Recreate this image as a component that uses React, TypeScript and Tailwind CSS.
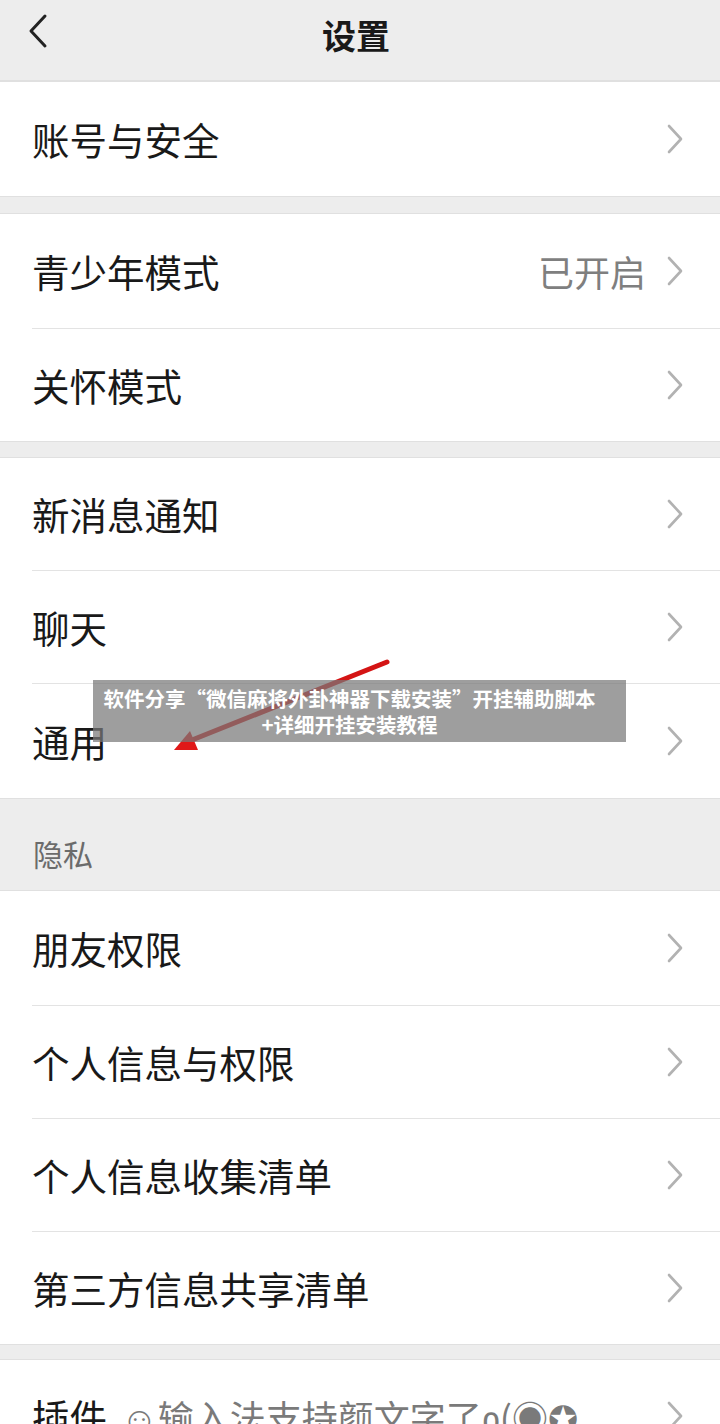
import React from "react";

const font = { fontFamily: '"Noto Sans CJK SC", "Noto Sans", sans-serif' };

function Chevron() {
  return (
    <svg width="18" height="30" viewBox="0 0 18 30" className="shrink-0">
      <path d="M3 2 L15 15 L3 28" fill="none" stroke="#b2b2b2" strokeWidth="2.6" strokeLinecap="round" strokeLinejoin="round" />
    </svg>
  );
}

function Row({ label, value, h = "h-[112px]", divider = false, extra }: { label: string; value?: string; h?: string; divider?: boolean; extra?: React.ReactNode }) {
  return (
    <div className="bg-white">
      {divider && <div className="ml-[32px] h-px bg-[#e3e3e3]" />}
      <div className={`${h} flex items-center pl-[32px] pr-[36px]`}>
        <div className="flex-1 flex items-center min-w-0 overflow-hidden whitespace-nowrap">
          <span className="text-[37.5px] text-[#191919] leading-normal">{label}</span>
          {extra}
        </div>
        {value && <span className="text-[36px] text-[#7f7f7f] leading-normal mr-[20px]">{value}</span>}
        <Chevron />
      </div>
    </div>
  );
}

function Group({ children }: { children: React.ReactNode }) {
  return <div className="border-y border-[#e0e0e0] bg-white">{children}</div>;
}

export default function App() {
  return (
    <div className="relative w-[720px] h-[1424px] overflow-hidden bg-[#ededed]" style={font}>
      <header className="h-[81px] border-b border-[#e0e0e0] flex items-center justify-center relative bg-[#ededed]">
        <svg width="24" height="38" viewBox="0 0 24 38" className="absolute left-[26px] top-[13px]">
          <path d="M19 3 L5 18 L19 33" fill="none" stroke="#222" strokeWidth="3" strokeLinecap="round" strokeLinejoin="round" />
        </svg>
        <h1 className="text-[34px] font-bold text-[#191919] leading-normal -mt-[12px] -ml-[8px]">设置</h1>
      </header>

      <Group>
        <Row label="账号与安全" h="h-[114px]" />
      </Group>
      <div className="h-[16px]" />
      <Group>
        <Row label="青少年模式" value="已开启" h="h-[114px]" />
        <Row label="关怀模式" divider />
      </Group>
      <div className="h-[15px]" />
      <Group>
        <Row label="新消息通知" />
        <Row label="聊天" divider />
        <Row label="通用" divider h="h-[114px]" />
      </Group>
      <div className="h-[91px] flex items-center pl-[33px]">
        <span className="text-[30px] text-[#6b6b6b] leading-normal mt-[18px]">隐私</span>
      </div>
      <Group>
        <Row label="朋友权限" h="h-[114px]" />
        <Row label="个人信息与权限" divider />
        <Row label="个人信息收集清单" divider />
        <Row label="第三方信息共享清单" divider />
      </Group>
      <div className="h-[14px]" />
      <Group>
        <Row
          label="插件"
          h="h-[112px]"
          extra={<span className="ml-[14px] text-[36px] text-[#7a7a7a] leading-normal">☺输入法支持颜文字了ჲ(◉✪..</span>}
        />
      </Group>

      <svg className="absolute left-0 top-0 pointer-events-none" width="720" height="1424">
        <line x1="387" y1="662" x2="192" y2="740" stroke="#d41414" strokeWidth="5" strokeLinecap="round" />
        <polygon points="174,750 198,750 190,731" fill="#e01818" />
      </svg>

      <div className="absolute left-[93px] top-[680px] w-[533px] h-[62px] pr-[20px] bg-[rgba(120,120,120,0.72)] flex flex-col items-center justify-center">
        <p className="text-[20.5px] font-bold text-white leading-[26px] text-center whitespace-nowrap">软件分享“微信麻将外卦神器下载安装”开挂辅助脚本</p>
        <p className="text-[20.5px] font-bold text-white leading-[26px] text-center whitespace-nowrap">+详细开挂安装教程</p>
      </div>
    </div>
  );
}
